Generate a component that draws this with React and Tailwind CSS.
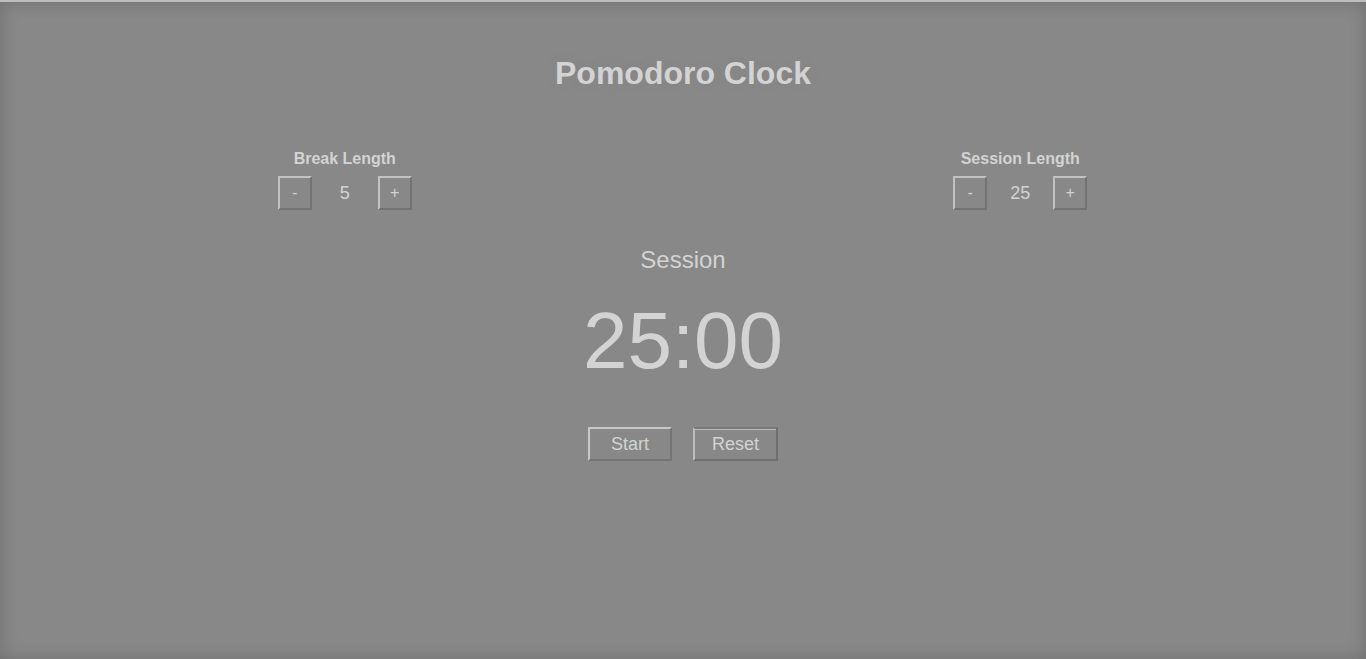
const font = { fontFamily: '"Liberation Sans", Arial, sans-serif' }

const StepButton = ({ children }) => (
  <button className="flex h-[34px] w-[34px] items-center justify-center border-2 border-t-[#c2c2c2] border-l-[#c2c2c2] border-r-[#727272] border-b-[#727272] bg-[#888888] text-[16px] leading-none text-[#d3d3d3]">
    {children}
  </button>
)

const LengthControl = ({ label, value }) => (
  <div className="flex flex-col items-center">
    <div className="text-[16px] font-bold leading-none text-[#d3d3d3]">{label}</div>
    <div className="mt-[9px] flex items-center">
      <StepButton>-</StepButton>
      <div className="w-[66px] text-center text-[18px] leading-none text-[#d3d3d3]">{value}</div>
      <StepButton>+</StepButton>
    </div>
  </div>
)

export default function App() {
  return (
    <div
      style={font}
      className="relative h-[659px] w-full overflow-hidden border-t-2 border-[#bdbdbd] bg-[#888888] shadow-[inset_0_0_18px_rgba(0,0,0,0.18)]"
    >
      <div className="flex flex-col items-center">
        <h1 className="mt-[55px] text-[32px] font-bold leading-none text-[#d3d3d3] [text-shadow:0_0_30px_rgba(0,0,0,0.06)]">
          Pomodoro Clock
        </h1>

        <div className="mt-[62px] grid w-full grid-cols-2 pl-[7px] pr-[8px]">
          <LengthControl label="Break Length" value="5" />
          <LengthControl label="Session Length" value="25" />
        </div>

        <div className="mt-[38px] text-[24px] leading-none text-[#d3d3d3]">Session</div>
        <div className="mt-[29px] text-[80px] leading-none text-[#d3d3d3]">25:00</div>

        <div className="mt-[46px] flex gap-[21px]">
          <button className="h-[34px] w-[84px] border-2 border-t-[#c8c8c8] border-l-[#c8c8c8] border-r-[#747474] border-b-[#747474] bg-[#888888] text-[18px] leading-none text-[#d3d3d3]">
            Start
          </button>
          <button className="h-[34px] w-[85px] border-2 border-t-[#7a7a7a] border-l-[#bdbdbd] border-r-[#6e6e6e] border-b-[#6e6e6e] bg-[#888888] text-[18px] leading-none text-[#d3d3d3] shadow-[inset_0_1px_0_#bcbcbc]">
            Reset
          </button>
        </div>
      </div>
    </div>
  )
}
